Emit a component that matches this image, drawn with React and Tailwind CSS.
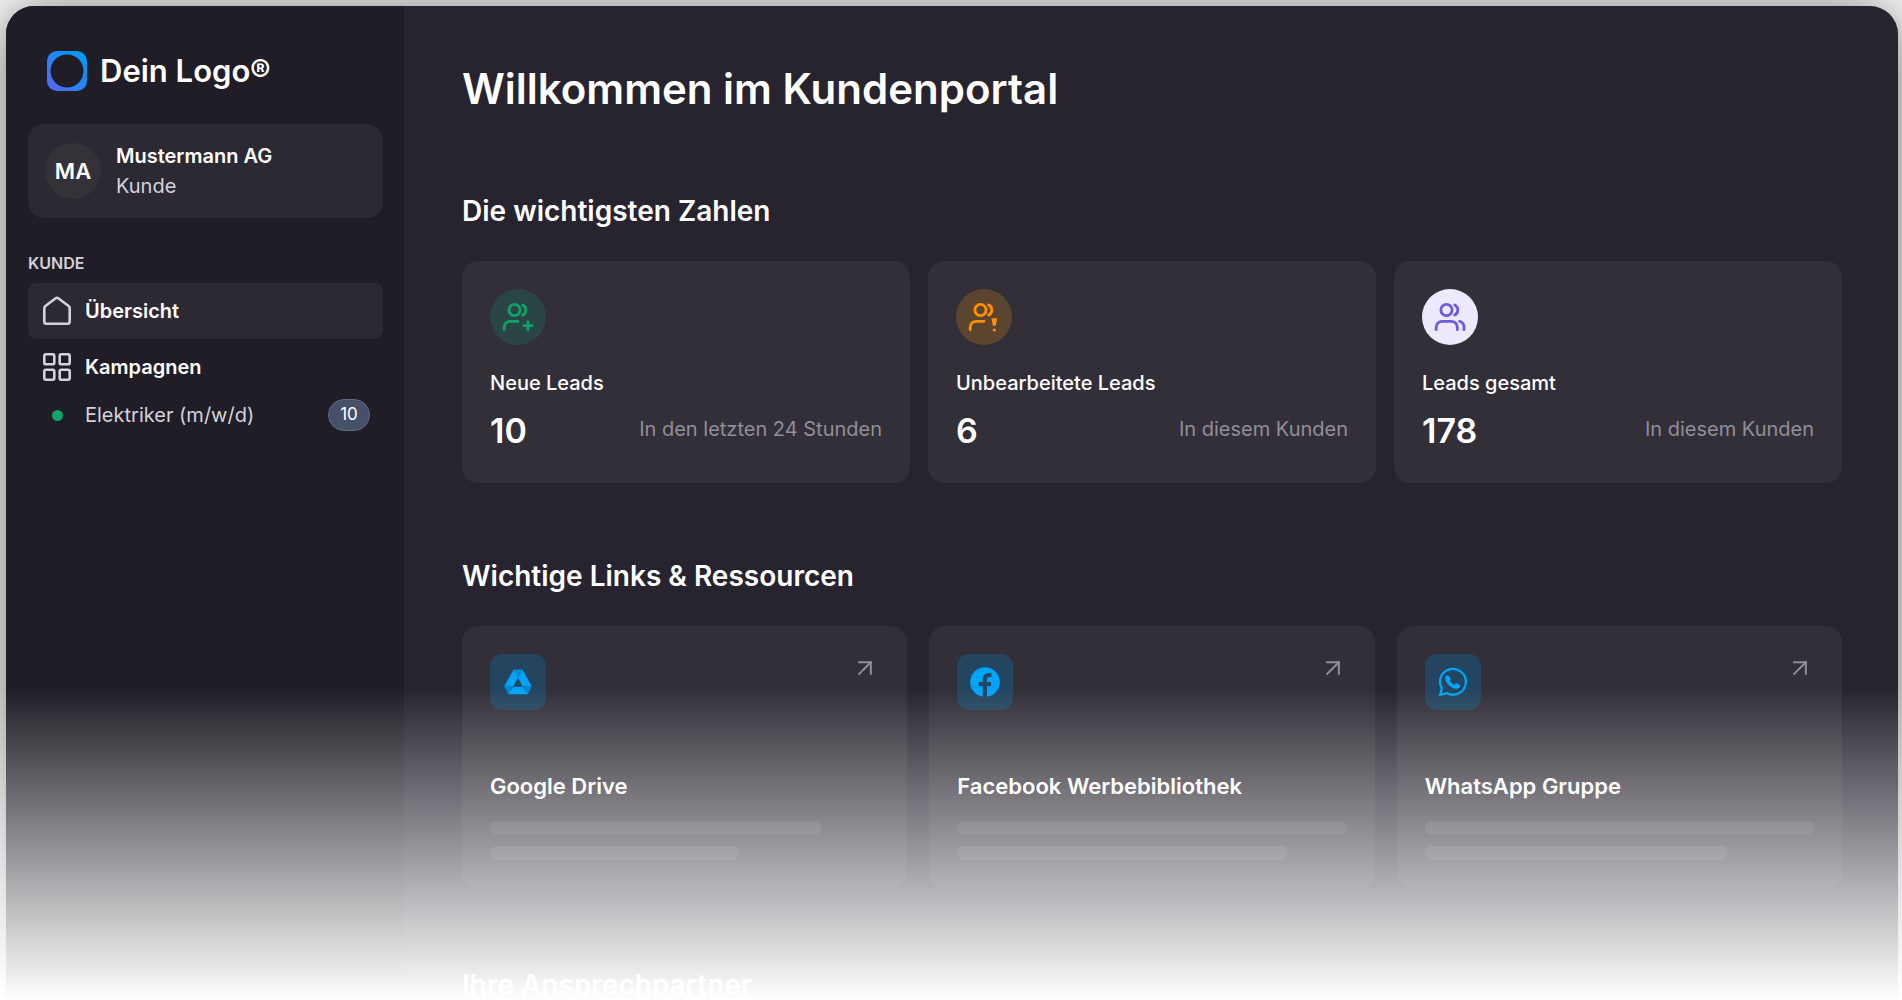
import { ArrowUpRight } from "lucide-react";

const stats = [
  {
    label: "Neue Leads",
    value: "10",
    note: "In den letzten 24 Stunden",
    icon: "plus",
    tone: "bg-[#2a4546] text-[#0fa36b]",
  },
  {
    label: "Unbearbeitete Leads",
    value: "6",
    note: "In diesem Kunden",
    icon: "alert",
    tone: "bg-[#5b452f] text-[#ff9100]",
  },
  {
    label: "Leads gesamt",
    value: "178",
    note: "In diesem Kunden",
    icon: "all",
    tone: "bg-[#eee9ff] text-[#6b5bdf]",
  },
];

const links = [
  { title: "Google Drive", icon: DriveIcon, lines: ["w-[85%]", "w-[64%]"] },
  { title: "Facebook Werbebibliothek", icon: FacebookIcon, lines: ["w-full", "w-[85%]"] },
  { title: "WhatsApp Gruppe", icon: WhatsappIcon, lines: ["w-full", "w-[78%]"] },
];

function LogoMark() {
  return (
    <svg className="h-10 w-10" viewBox="0 0 40 40" aria-hidden="true">
      <defs>
        <linearGradient id="logo" x1="0" y1="1" x2="1" y2="0">
          <stop offset="0.1" stopColor="#4f6bf5" />
          <stop offset="0.85" stopColor="#0299f8" />
        </linearGradient>
      </defs>
      <rect width="40" height="40" rx="10" fill="url(#logo)" />
      <circle cx="20" cy="20" r="16.5" fill="#201d26" />
    </svg>
  );
}

function HomeIcon() {
  return (
    <svg className="h-8 w-8" viewBox="0 0 32 32" fill="none" stroke="currentColor" strokeWidth="2.6" strokeLinejoin="round" aria-hidden="true">
      <path d="M3.3 13.2c0-.9.4-1.7 1.1-2.2L14.7 3.3a2.3 2.3 0 0 1 2.6 0L27.6 11c.7.5 1.1 1.3 1.1 2.2v13.3a2.2 2.2 0 0 1-2.2 2.2h-21a2.2 2.2 0 0 1-2.2-2.2z" />
    </svg>
  );
}

function GridIcon() {
  return (
    <svg className="h-8 w-8" viewBox="0 0 32 32" fill="none" stroke="currentColor" strokeWidth="2.6" aria-hidden="true">
      <rect x="3.3" y="3.3" width="10" height="10" rx="1.6" />
      <rect x="18.7" y="3.3" width="10" height="10" rx="1.6" />
      <rect x="3.3" y="18.7" width="10" height="10" rx="1.6" />
      <rect x="18.7" y="18.7" width="10" height="10" rx="1.6" />
    </svg>
  );
}

function UsersIcon({ variant }) {
  return (
    <svg
      className="h-8 w-8"
      viewBox="0 0 32 32"
      fill="none"
      stroke="currentColor"
      strokeWidth="2.8"
      strokeLinecap="round"
      strokeLinejoin="round"
      aria-hidden="true"
    >
      <circle cx="12.5" cy="9" r="5.6" />
      <path d="M20.7 3.9a5.7 5.7 0 0 1 0 10.2" />
      {variant === "plus" && <path d="M2.2 28.7v-2.4a6 6 0 0 1 6-6H16M25.9 20.7v8M21.9 24.7h8" />}
      {variant === "alert" && (
        <>
          <path d="M2.2 28.7v-2.4a6 6 0 0 1 6-6H16" />
          <path d="M24.2 17.9h4.2l-1.3 6.2h-1.6z" fill="currentColor" strokeWidth="1.5" />
          <circle cx="26.3" cy="29" r="1.6" fill="currentColor" stroke="none" />
        </>
      )}
      {variant === "all" && (
        <path d="M2.2 28.7v-2.4a6 6 0 0 1 6-6h9.1a6 6 0 0 1 6 6v2.4M25.6 20.3a5.6 5.6 0 0 1 4.4 5.7v2.7" />
      )}
    </svg>
  );
}

function DriveIcon() {
  return (
    <svg className="h-7 w-7" viewBox="0 0 28 28" aria-hidden="true">
      <path d="M9.6 1.500h9L14 9.700z" fill="#008ad4" />
      <path d="M.2 18.500h9.100l-5 7.800z" fill="#008ad4" />
      <path d="M27.800 18.500h-9.100l5 7.800z" fill="#008ad4" />
      <path d="M9.600 1.500.2 18.500h9.100L14 9.700z" fill="#00a4f8" />
      <path d="M18.500 1.500l9.300 17h-9.100L14 9.700z" fill="#00a4f8" />
      <path d="M9.300 18.800h9.400l5 7.500H4.300z" fill="#00a4f8" />
    </svg>
  );
}

function FacebookIcon() {
  return (
    <svg className="h-[30px] w-[30px]" viewBox="0 0 30 30" aria-hidden="true">
      <circle cx="15" cy="15" r="14.8" fill="#00a4f8" />
      <path d="M14.8 30V12.600c0-3 1.600-4.600 4.400-4.600h2.200M8.700 17.200H21" fill="none" stroke="#24455f" strokeWidth="4.2" />
    </svg>
  );
}

function WhatsappIcon() {
  return (
    <svg className="h-[30px] w-[30px]" viewBox="0 0 30 30" aria-hidden="true">
      <path
        d="M3.9 21.400A12.900 12.900 0 1 1 9 26.200L2.200 27.800z"
        fill="none"
        stroke="currentColor"
        strokeWidth="2.3"
      />
      <path
        d="M8.3 9c1-.9 2.300-.6 2.900.4l1 2.200c.3.700.2 1.300-.5 2.100.9 1.900 2.300 3.300 4.600 4.300l1.600-1.200c.5-.3 1-.3 1.500 0l2 1.100c.8.500.8 1.400.1 2.300-1.700 1.700-4.300 2-7.300.3-3.100-1.700-5.500-4.400-6.500-7.200-.6-1.700-.4-3.300.6-4.300z"
        fill="currentColor"
        stroke="currentColor"
        strokeWidth="0.5"
      />
    </svg>
  );
}

function StatCard({ stat }) {
  return (
    <article className="rounded-2xl bg-[#332f39] px-7 pt-7 pb-[30px]">
      <div className={`flex h-14 w-14 items-center justify-center rounded-full ${stat.tone}`}>
        <UsersIcon variant={stat.icon} />
      </div>
      <h3 className="mt-6 text-xl leading-7 font-medium">{stat.label}</h3>
      <div className="mt-3 flex items-start justify-between gap-4">
        <p className="text-[34px] leading-[44px] font-semibold">{stat.value}</p>
        <p className="text-xl leading-10 text-[#918e97]">{stat.note}</p>
      </div>
    </article>
  );
}

function LinkCard({ link }) {
  const LinkIcon = link.icon;
  return (
    <a href="#" className="block rounded-2xl bg-[#332f39] px-7 pt-7 pb-[29px]">
      <div className="flex items-start justify-between">
        <div className="flex h-14 w-14 items-center justify-center rounded-xl bg-[#24455f] text-[#00a4f8]">
          <LinkIcon />
        </div>
        <ArrowUpRight className="h-7 w-7 text-[#918e97]" strokeWidth={1.7} strokeLinecap="square" strokeLinejoin="miter" />
      </div>
      <h3 className="mt-[60px] text-[22px] leading-8 font-semibold">{link.title}</h3>
      <div className="mt-[19px] space-y-[11px]">
        {link.lines.map((width) => (
          <div key={width} className={`h-3.5 rounded-full bg-white/8 ${width}`} />
        ))}
      </div>
    </a>
  );
}

function Sidebar() {
  return (
    <aside className="w-[398px] shrink-0 bg-[#201d26] pt-[45px] pr-[21px] pl-[22px]">
      <a href="#" className="flex items-center gap-[13px] pl-[19px]">
        <LogoMark />
        <span className="text-[31px] leading-10 font-semibold">Dein Logo®</span>
      </a>

      <div className="mt-[33px] flex items-center gap-[15px] rounded-2xl bg-[#2c2933] p-[17px]">
        <div className="flex h-14 w-14 items-center justify-center rounded-full bg-[#343138] text-[22px] font-semibold">MA</div>
        <div>
          <p className="text-xl leading-[30px] font-semibold">Mustermann AG</p>
          <p className="text-xl leading-[30px] text-[#d5d2dc]">Kunde</p>
        </div>
      </div>

      <nav className="mt-[33px]">
        <p className="text-base leading-6 font-semibold text-[#d5d2dc]">KUNDE</p>
        <a href="#" className="mt-2 flex h-14 items-center gap-3 rounded-lg bg-[#2c2933] px-[13px] text-[#d5d2dc]">
          <HomeIcon />
          <span className="text-xl font-semibold text-white">Übersicht</span>
        </a>
        <a href="#" className="flex h-14 items-center gap-3 px-[13px] text-[#d5d2dc]">
          <GridIcon />
          <span className="text-xl font-semibold text-white">Kampagnen</span>
        </a>
        <a href="#" className="flex h-10 items-center gap-3 px-[13px] text-[#d5d2dc]">
          <span className="flex w-8 justify-center">
            <span className="h-[11px] w-[11px] rounded-full bg-[#0fa36b]" />
          </span>
          <span className="grow text-xl">Elektriker (m/w/d)</span>
          <span className="flex h-8 w-[42px] items-center justify-center rounded-full border border-[#5d6b85] bg-[#475069] text-[17px] text-white">
            10
          </span>
        </a>
      </nav>
    </aside>
  );
}

export default function App() {
  return (
    <div className="relative h-screen overflow-hidden bg-white pt-1.5 pr-1 pl-1.5 font-['Inter',sans-serif] text-white">
      <div className="flex min-h-full overflow-hidden rounded-t-[28px] bg-[#272430] shadow-[0_4px_60px_rgba(0,0,0,0.6)]">
        <Sidebar />
        <main className="min-w-0 grow pt-[59px] pr-14 pl-[58px]">
          <h1 className="text-[42px] leading-[48px] font-semibold">Willkommen im Kundenportal</h1>

          <section className="mt-20">
            <h2 className="text-[28px] leading-9 font-semibold">Die wichtigsten Zahlen</h2>
            <div className="mt-8 grid grid-cols-3 gap-[18px]">
              {stats.map((stat) => (
                <StatCard key={stat.label} stat={stat} />
              ))}
            </div>
          </section>

          <section className="mt-[75px]">
            <h2 className="text-[28px] leading-9 font-semibold">Wichtige Links &amp; Ressourcen</h2>
            <div className="mt-8 grid grid-cols-3 gap-[22px]">
              {links.map((link) => (
                <LinkCard key={link.title} link={link} />
              ))}
            </div>
          </section>

          <section className="mt-[78px]">
            <h2 className="text-[28px] leading-9 font-semibold">Ihre Ansprechpartner</h2>
          </section>
        </main>
      </div>
      <div className="pointer-events-none absolute inset-x-0 bottom-0 h-[312px] bg-linear-to-b from-white/0 to-white" />
    </div>
  );
}
